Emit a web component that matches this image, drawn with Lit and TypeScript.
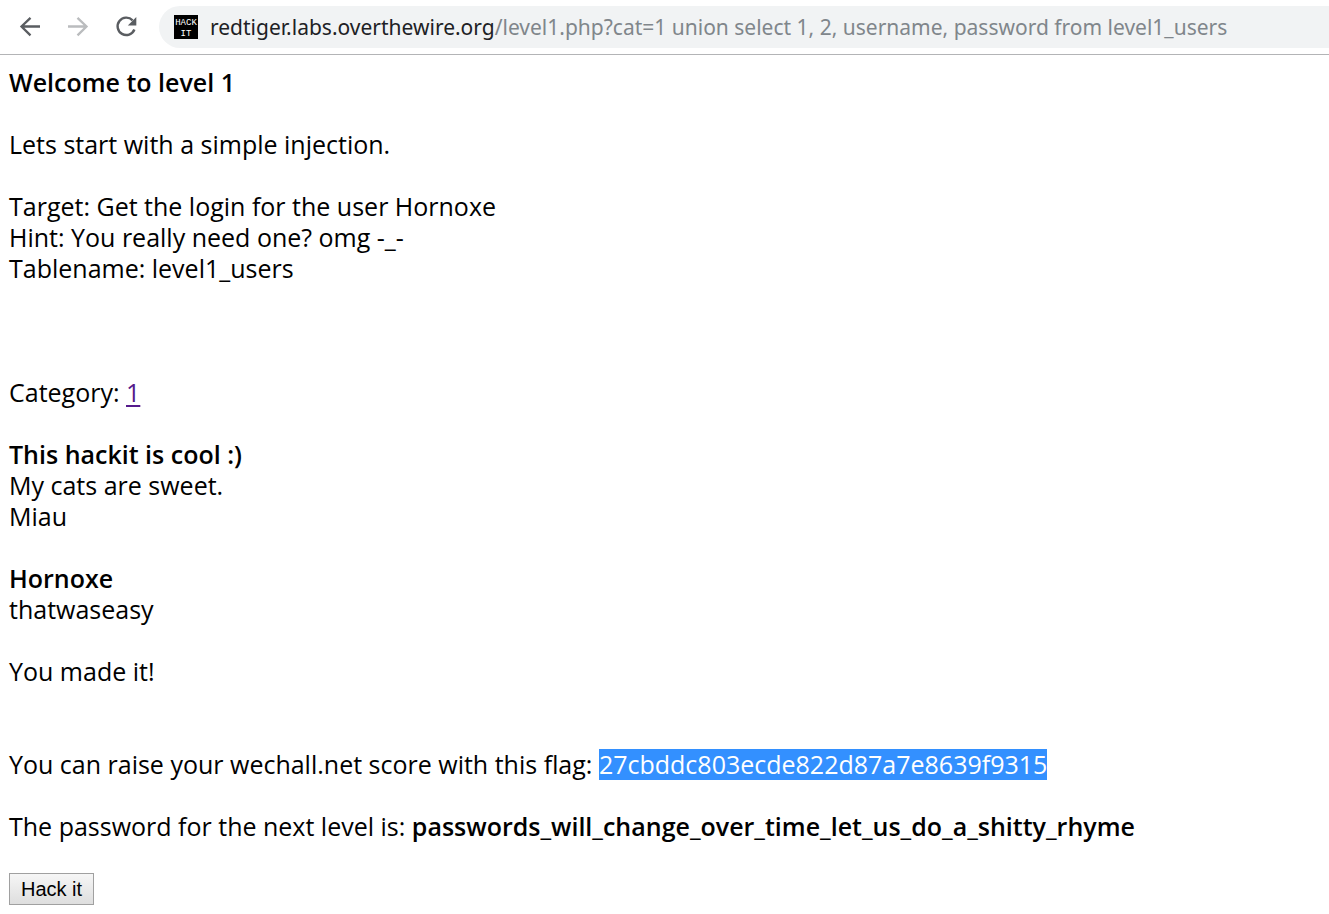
import { LitElement, html, css } from "lit";
import { customElement } from "lit/decorators.js";

@customElement("browser-bar")
class BrowserBar extends LitElement {
  static styles = css`
    :host {
      display: block;
    }
    .bar {
      display: flex;
      align-items: center;
      height: 42px;
      padding: 6px 0 6px 14px;
      border-bottom: 1px solid #b3b4b6;
      background: #fff;
    }
    .nav {
      display: flex;
      gap: 16px;
      margin-right: 17px;
    }
    .nav-button {
      display: block;
      width: 32px;
      height: 32px;
      padding: 0;
      border: 0;
      background: none;
      color: #5a5d61;
    }
    .nav-button:disabled {
      color: #babcbe;
    }
    .glyph {
      display: block;
      width: 32px;
      height: 32px;
    }
    .address {
      display: flex;
      align-items: center;
      flex: 1;
      min-width: 0;
      height: 42px;
      padding-left: 15px;
      border-radius: 21px 0 0 21px;
      background: #f1f3f4;
    }
    .favicon {
      flex: none;
      width: 24px;
      height: 24px;
      margin-right: 12px;
      background: #000;
    }
    .favicon-text {
      font: 9px "Liberation Mono", monospace;
      fill: #fff;
      text-anchor: middle;
    }
    .url {
      overflow: hidden;
      white-space: nowrap;
      font: 21px/32px "Noto Sans", "Open Sans", sans-serif;
      color: #80868b;
    }
    .host {
      color: #202124;
    }
  `;

  render() {
    return html`
      <header class="bar">
        <nav class="nav" aria-label="History">
          <button class="nav-button" aria-label="Back">
            <svg class="glyph" viewBox="0 0 32 32" fill="none" stroke="currentColor" stroke-width="2.3">
              <path d="M26 15.500H8M16.500 6.800L7.500 15.500l9 8.900" />
            </svg>
          </button>
          <button class="nav-button" aria-label="Forward" disabled>
            <svg class="glyph" viewBox="0 0 32 32" fill="none" stroke="currentColor" stroke-width="2.3">
              <path d="M6 15.500H24M15.500 6.800L24.500 15.500l-9 8.900" />
            </svg>
          </button>
          <button class="nav-button" aria-label="Reload">
            <svg class="glyph" viewBox="0 0 32 32">
              <path d="M22.600 9.300A8.700 8.700 0 1 0 24.400 18.500" fill="none" stroke="currentColor" stroke-width="2.400" />
              <path d="M26.300 6v8.500h-8.500z" fill="currentColor" />
            </svg>
          </button>
        </nav>
        <div class="address">
          <svg class="favicon" viewBox="0 0 24 24" aria-hidden="true">
            <text class="favicon-text" x="12" y="10">HACK</text>
            <text class="favicon-text" x="12" y="21">IT</text>
          </svg>
          <div class="url" role="textbox" aria-label="Address"><span class="host">redtiger.labs.overthewire.org</span>/level1.php?cat=1 union select 1, 2, username, password from level1_users</div>
        </div>
      </header>
    `;
  }
}

@customElement("app-root")
class AppRoot extends LitElement {
  static styles = css`
    :host {
      display: block;
      background: #fff;
      color: #000;
    }
    .page {
      padding: 12px 9px 9px;
      font: 25px/31px "Open Sans", "Noto Sans", sans-serif;
    }
    .block {
      margin: 0 0 31px;
    }
    .block-target {
      margin-bottom: 93px;
    }
    .block-made {
      margin-bottom: 62px;
    }
    .strong {
      font-weight: 600;
    }
    .link {
      color: #551a8b;
      text-decoration-thickness: 2px;
      text-underline-offset: 3px;
    }
    .flag {
      display: inline-block;
      background: #3390ff;
      color: #fff;
    }
    .submit {
      display: block;
      height: 32px;
      padding: 0 11px;
      border: 1px solid #a0a0a0;
      border-radius: 0;
      background: linear-gradient(#f6f6f6, #dedede);
      color: #000;
      font: 20px/30px "Liberation Sans", Arial, sans-serif;
    }
  `;

  render() {
    return html`
      <browser-bar></browser-bar>
      <main class="page">
        <p class="block"><b class="strong">Welcome to level 1</b></p>
        <p class="block">Lets start with a simple injection.</p>
        <p class="block block-target">
          Target: Get the login for the user Hornoxe<br />
          Hint: You really need one? omg -_-<br />
          Tablename: level1_users
        </p>
        <p class="block">Category: <a class="link" href="?cat=1">1</a></p>
        <p class="block">
          <b class="strong">This hackit is cool :)</b><br />
          My cats are sweet.<br />
          Miau
        </p>
        <p class="block">
          <b class="strong">Hornoxe</b><br />
          thatwaseasy
        </p>
        <p class="block block-made">You made it!</p>
        <p class="block">
          You can raise your wechall.net score with this flag:
          <span class="flag">27cbddc803ecde822d87a7e8639f9315</span>
        </p>
        <p class="block">
          The password for the next level is:
          <b class="strong">passwords_will_change_over_time_let_us_do_a_shitty_rhyme</b>
        </p>
        <button class="submit" type="button">Hack it</button>
      </main>
    `;
  }
}
